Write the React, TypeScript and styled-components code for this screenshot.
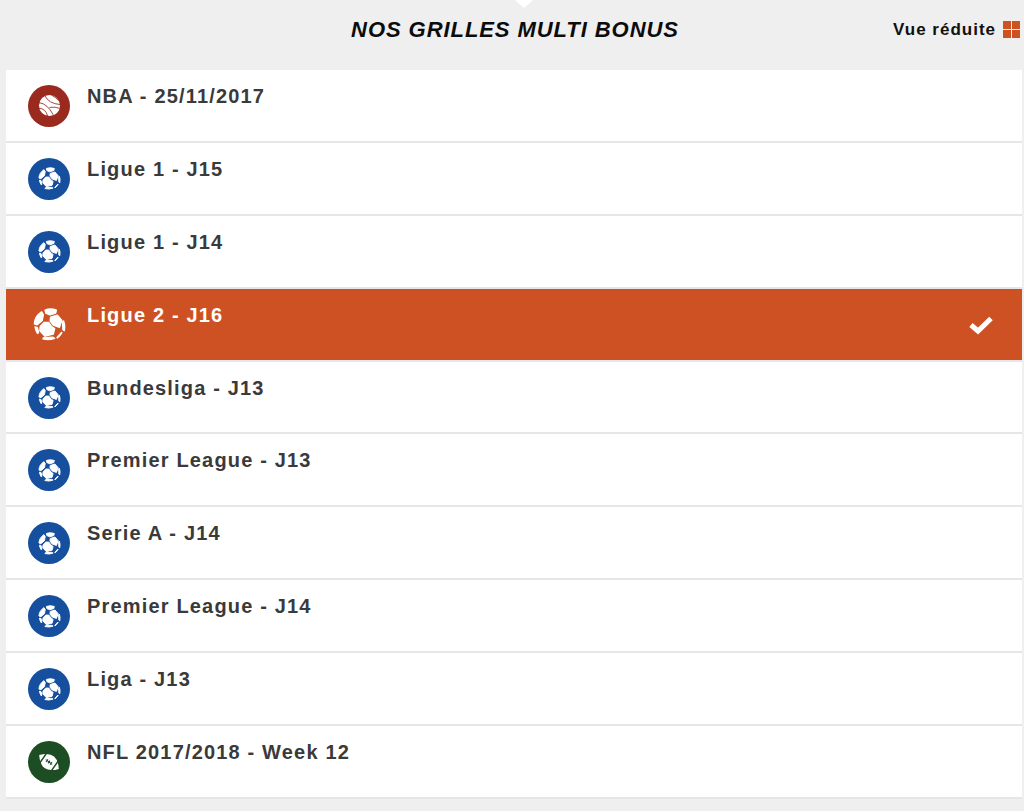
import React, {FC} from "react";
import styled, {createGlobalStyle} from "styled-components";

const ORANGE = "#ce5123";

type Sport = "basket" | "foot" | "nfl";

interface IGrid {
    title: string;
    sport: Sport;
    active?: boolean;
}

const grids: IGrid[] = [
    {title: "NBA - 25/11/2017", sport: "basket"},
    {title: "Ligue 1 - J15", sport: "foot"},
    {title: "Ligue 1 - J14", sport: "foot"},
    {title: "Ligue 2 - J16", sport: "foot", active: true},
    {title: "Bundesliga - J13", sport: "foot"},
    {title: "Premier League - J13", sport: "foot"},
    {title: "Serie A - J14", sport: "foot"},
    {title: "Premier League - J14", sport: "foot"},
    {title: "Liga - J13", sport: "foot"},
    {title: "NFL 2017/2018 - Week 12", sport: "nfl"}
];

const sportColors: Record<Sport, string> = {
    basket: "#9a291e",
    foot: "#154f9e",
    nfl: "#1d4d22"
};

const GlobalStyle = createGlobalStyle`
  html, body {
    margin: 0;
    padding: 0;
    background: #efefef;
    font-family: "Liberation Sans", Arial, sans-serif;
  }
`;

const Page = styled.div`
  width: 1024px;
  height: 811px;
  overflow: hidden;
  background: #efefef;
  position: relative;
`;

const Notch = styled.div`
  position: absolute;
  top: 0;
  left: 515px;
  width: 0;
  height: 0;
  border-left: 9px solid transparent;
  border-right: 9px solid transparent;
  border-top: 8px solid #ffffff;
`;

const Header = styled.header`
  height: 70px;
  box-sizing: border-box;
  padding: 0 4px 10px 10px;
  display: grid;
  grid-template-columns: 1fr auto 1fr;
  align-items: center;
`;

const Title = styled.h1`
  grid-column: 2;
  margin: 0;
  font-size: 22px;
  font-weight: bold;
  font-style: italic;
  letter-spacing: 0.93px;
  color: #0c0c0c;
`;

const ViewToggle = styled.div`
  grid-column: 3;
  justify-self: end;
  display: flex;
  align-items: center;
  gap: 7px;
  font-size: 17px;
  font-weight: bold;
  letter-spacing: 1px;
  color: #111111;
`;

const Squares = styled.div`
  display: grid;
  grid-template-columns: 8px 8px;
  grid-auto-rows: 8px;
  gap: 1px;
  margin-top: -1px;
`;

const Square = styled.span`
  background: ${ORANGE};
`;

const List = styled.ul`
  list-style: none;
  margin: 0 2px 0 6px;
  padding: 0;
`;

const Row = styled.li<{$active?: boolean}>`
  height: 72.9px;
  box-sizing: border-box;
  padding: 1px 29px 0 22px;
  display: flex;
  align-items: center;
  gap: 17px;
  background: ${p => (p.$active ? ORANGE : "#ffffff")};
  border-bottom: 2px solid #e6e6e6;
  color: ${p => (p.$active ? "#ffffff" : "#3a3a3a")};
`;

const Badge = styled.span<{$color: string}>`
  flex: none;
  width: 42px;
  height: 42px;
  border-radius: 50%;
  background: ${p => p.$color};
  display: flex;
  align-items: center;
  justify-content: center;
`;

const RowTitle = styled.span`
  flex: 1;
  align-self: flex-start;
  padding-top: 13px;
  font-size: 20px;
  line-height: 24px;
  font-weight: bold;
  letter-spacing: 1.17px;
`;

const FootIcon: FC<{size: number; color: string}> = ({size, color}) => (
    <svg width={size} height={size} viewBox="1 0 96 96" fill={color} stroke={color} strokeWidth="4" strokeLinejoin="round">
        <path d="M36 6 Q52 0 69 6 L67 15 L50 20 L38 15 Z"/>
        <path d="M26 11 L31 19 L28 36 L13 49 L5 46 Q6 24 26 11 Z"/>
        <path d="M52 27 L72 21 L85 36 L78 56 L60 50 L51 38 Z"/>
        <path d="M33 42 L46 42 L56 55 L64 60 L60 76 L36 82 L21 66 L22 54 Z"/>
        <path d="M87 41 L90 38 Q95 50 92 66 L88 63 Z"/>
        <path d="M7 55 L14 57 L17 72 L14 74 Q9 66 7 55 Z"/>
        <path d="M30 89 L33 86 L58 85 L64 88 Q48 95 30 90 Z"/>
        <path d="M71 86 L84 71 L85 72 Q80 81 72 87 Z"/>
    </svg>
);

const BasketIcon: FC = () => (
    <svg width={23} height={23} viewBox="0 0 24 24" fill="none">
        <circle cx="12" cy="12" r="11" fill="#ffffff"/>
        <g stroke="#9a291e" strokeWidth="0.9" fill="none">
            <path d="M7 1.5 Q11 10 23 11"/>
            <path d="M1 9 Q10 10 16 22"/>
            <path d="M1 15 Q8 15 10 23"/>
            <path d="M14 1 Q19 4 22 7"/>
            <path d="M12 14 Q18 13 22.5 15"/>
        </g>
    </svg>
);

const NflIcon: FC = () => (
    <svg width={26} height={26} viewBox="0 0 26 26">
        <g transform="rotate(35 13 13)">
            <path d="M1 13 Q13 -2 25 13 Q13 28 1 13 Z" fill="#ffffff"/>
            <path d="M6 4 L6 22 M20 4 L20 22" stroke="#1d4d22" strokeWidth="1.5"/>
            <path d="M9 13 H17 M10.5 11.3 V14.7 M13 11.3 V14.7 M15.5 11.3 V14.7" stroke="#1d4d22" strokeWidth="1"/>
        </g>
    </svg>
);

const CheckIcon: FC = () => (
    <svg width={24} height={20} viewBox="0 0 24 20">
        <path d="M2 10 L9 16 L22 3.5" fill="none" stroke="#ffffff" strokeWidth="5"/>
    </svg>
);

const SportIcon: FC<{sport: Sport; active?: boolean}> = ({sport, active}) => {
    if (active) {
        return <Badge $color="transparent"><FootIcon size={33} color="#ffffff"/></Badge>;
    }

    return (
        <Badge $color={sportColors[sport]}>
            {sport === "basket" && <BasketIcon/>}
            {sport === "foot" && <FootIcon size={23} color="#ffffff"/>}
            {sport === "nfl" && <NflIcon/>}
        </Badge>
    );
};

const App: FC = () => (
    <Page>
        <GlobalStyle/>
        <Notch/>
        <Header>
            <Title>NOS GRILLES MULTI BONUS</Title>
            <ViewToggle>
                Vue réduite
                <Squares>
                    <Square/>
                    <Square/>
                    <Square/>
                    <Square/>
                </Squares>
            </ViewToggle>
        </Header>
        <List>
            {grids.map(grid => (
                <Row key={grid.title} $active={grid.active}>
                    <SportIcon sport={grid.sport} active={grid.active}/>
                    <RowTitle>{grid.title}</RowTitle>
                    {grid.active && <CheckIcon/>}
                </Row>
            ))}
        </List>
    </Page>
);

export default App;
